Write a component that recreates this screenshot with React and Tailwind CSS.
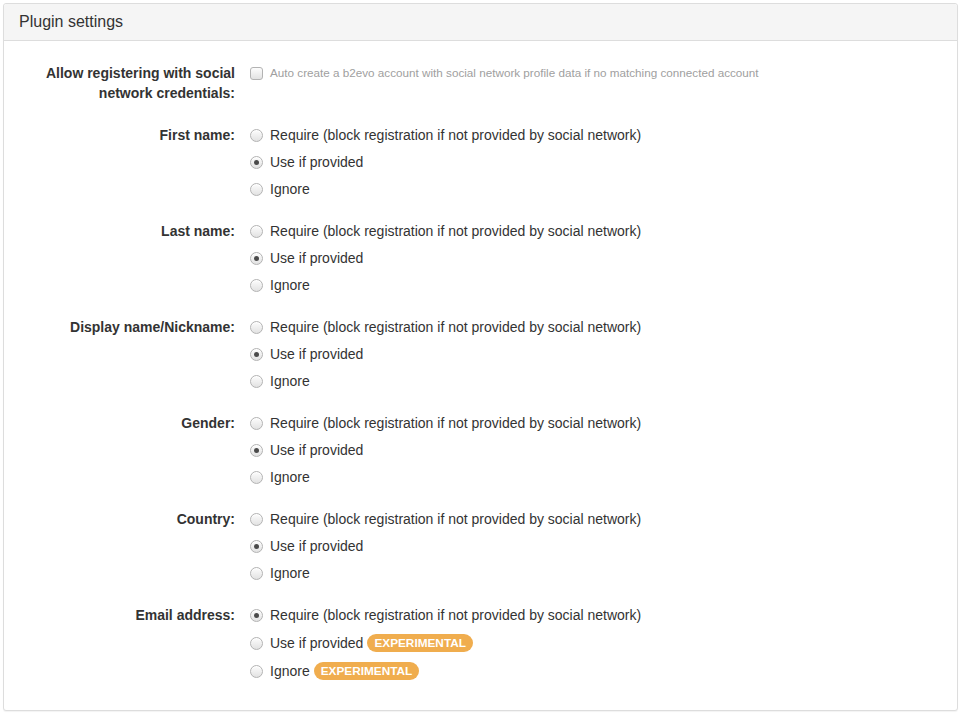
const groups = [
  { label: 'First name:', checked: 1 },
  { label: 'Last name:', checked: 1 },
  { label: 'Display name/Nickname:', checked: 1 },
  { label: 'Gender:', checked: 1 },
  { label: 'Country:', checked: 1 },
]

const options = [
  'Require (block registration if not provided by social network)',
  'Use if provided',
  'Ignore',
]

function Radio({ checked }) {
  return (
    <span className="w-[13px] h-[13px] rounded-full border border-[#b3b3b3] bg-gradient-to-b from-[#fdfdfd] to-[#e2e2e2] flex items-center justify-center shrink-0 shadow-[inset_0_1px_0_#fff]">
      {checked && <span className="w-[5px] h-[5px] rounded-full bg-[#4a4a4a]" />}
    </span>
  )
}

function Badge() {
  return (
    <span className="ml-[4px] h-[18px] px-[7px] rounded-full bg-[#f0ad4e] text-white text-[11.8px] font-bold leading-[18px]">
      EXPERIMENTAL
    </span>
  )
}

function Group({ label, checked, badges, last }) {
  return (
    <div className={'flex ' + (last ? '' : 'mb-[15px]')}>
      <div className="w-[216px] text-right font-bold leading-[27px] text-[#333]">{label}</div>
      <div className="ml-[15px]">
        {options.map((o, i) => (
          <div
            key={o}
            className={'flex items-center ' + (badges && i > 0 ? 'h-[28px]' : 'h-[27px]')}
          >
            <Radio checked={checked === i} />
            <span className="ml-[7px] text-[#333]">{o}</span>
            {badges && i > 0 && <Badge />}
          </div>
        ))}
      </div>
    </div>
  )
}

export default function App() {
  return (
    <div className="p-[3px] font-['Liberation_Sans',Arial,sans-serif] text-[14px]">
      <div className="border border-[#dddddd] rounded-[3px] bg-white shadow-[0_1px_1px_rgba(0,0,0,0.05)]">
        <div className="h-[37px] flex items-center px-[15px] bg-[#f5f5f5] border-b border-[#dddddd] rounded-t-[3px] text-[16px] text-[#333]">
          Plugin settings
        </div>
        <div className="px-[15px] pt-[22px] pb-[25px]">
          <div className="flex mb-[19px]">
            <div className="w-[216px] text-right font-bold leading-5 text-[#333]">
              Allow registering with social network credentials:
            </div>
            <div className="ml-[15px] h-5 flex items-center">
              <span className="w-[13px] h-[13px] rounded-[3px] border border-[#b3b3b3] bg-gradient-to-b from-[#fdfdfd] to-[#e2e2e2] shrink-0" />
              <span className="ml-[7px] text-[11.7px] text-[#a0a0a0]">
                Auto create a b2evo account with social network profile data if no matching connected account
              </span>
            </div>
          </div>
          {groups.map(g => (
            <Group key={g.label} label={g.label} checked={g.checked} />
          ))}
          <Group label="Email address:" checked={0} badges last />
        </div>
      </div>
    </div>
  )
}
